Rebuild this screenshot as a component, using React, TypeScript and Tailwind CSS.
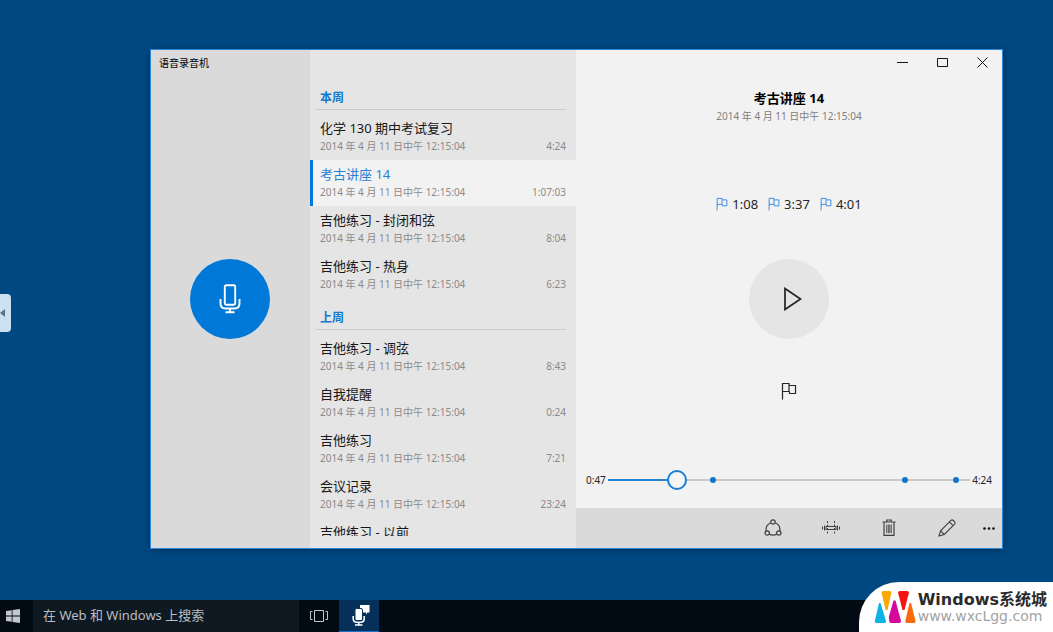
import { useState } from "react";
import type { ReactNode } from "react";

interface Recording {
  title: string;
  duration?: string;
}

interface RecordingGroup {
  label: string;
  items: Recording[];
}

const RECORDED_AT = "2014 年 4 月 11 日中午 12:15:04";

const groups: RecordingGroup[] = [
  {
    label: "本周",
    items: [
      { title: "化学 130 期中考试复习", duration: "4:24" },
      { title: "考古讲座 14", duration: "1:07:03" },
      { title: "吉他练习 - 封闭和弦", duration: "8:04" },
      { title: "吉他练习 - 热身", duration: "6:23" },
    ],
  },
  {
    label: "上周",
    items: [
      { title: "吉他练习 - 调弦", duration: "8:43" },
      { title: "自我提醒", duration: "0:24" },
      { title: "吉他练习", duration: "7:21" },
      { title: "会议记录", duration: "23:24" },
      { title: "吉他练习 - 以前" },
    ],
  },
];

const markers = [
  { time: "1:08", left: "29%" },
  { time: "3:37", left: "82%" },
  { time: "4:01", left: "96%" },
];

function FlagIcon({ className }: { className: string }) {
  return (
    <svg viewBox="0 0 16 18" className={className} fill="none" stroke="currentColor" strokeWidth="1.2" aria-hidden="true">
      <path d="M1.5 17.5V1.5h6.5v8H1.5" />
      <path d="M8 3.5h6.5v8H8.5v-2" />
    </svg>
  );
}

function MicIcon() {
  return (
    <svg viewBox="0 0 22 30" className="h-[30px] w-[22px]" fill="none" stroke="white" strokeWidth="1.9" aria-hidden="true">
      <rect x="5.8" y="1.3" width="10.4" height="19.5" rx="1.5" />
      <path d="M1.5 15v4.5q0 5 5 5h9q5 0 5-5V15M11 24.5v4M6.5 28.3h9" />
    </svg>
  );
}

function ShareIcon() {
  return (
    <svg viewBox="0 0 18 18" className="size-[18px]" fill="none" stroke="currentColor" strokeWidth="1.2" aria-hidden="true">
      <circle cx="9" cy="3" r="2.2" />
      <circle cx="3.2" cy="14" r="2.2" />
      <circle cx="14.8" cy="14" r="2.2" />
      <path d="M6.9 3.7C3.6 5 1.6 8.2 2.1 12M11.1 3.7c3.3 1.3 5.3 4.5 4.8 8.3M5.3 15.1c2.3 1.2 5.1 1.2 7.4 0" />
    </svg>
  );
}

function TrimIcon() {
  return (
    <svg viewBox="0 0 18 14" className="h-[14px] w-[18px]" fill="none" stroke="currentColor" aria-hidden="true">
      <path d="M.5 5.5v3M2.5 4.5v5M15.5 4.5v5M17.5 5.5v3" />
      <path d="M5.5 0v14M12.5 0v14" strokeDasharray="2 1.5" />
      <rect x="4" y="5.5" width="10" height="3" />
    </svg>
  );
}

function TrashIcon() {
  return (
    <svg viewBox="0 0 14 18" className="h-[18px] w-[14px]" fill="none" stroke="currentColor" strokeWidth="1.2" aria-hidden="true">
      <path d="M.5 3h13M4.8 3V1h4.4v2M2 3v13.4h10V3" />
      <path d="M4.7 5.5v8.6M6.3 5.5v8.6M7.8 5.5v8.6M9.3 5.5v8.6" strokeWidth=".9" />
    </svg>
  );
}

function PencilIcon() {
  return (
    <svg viewBox="0 0 18 18" className="size-[18px]" fill="none" stroke="currentColor" strokeWidth="1.1" aria-hidden="true">
      <path d="M1 17l1.6-5.2L12.9 1.4q1.2-1 2.5.1l1.1 1.1q1.1 1.3.1 2.5L6.3 15.4zM2.6 11.8l3.7 3.6M11.4 2.9l3.7 3.7" />
    </svg>
  );
}

function CaptionButton({ label, children }: { label: string; children: ReactNode }) {
  return (
    <button type="button" aria-label={label} className="flex h-6 w-10 items-center justify-center text-neutral-900 hover:bg-black/10">
      <svg viewBox="0 0 11 11" className="size-[11px]" fill="none" stroke="currentColor" aria-hidden="true">
        {children}
      </svg>
    </button>
  );
}

function ToolButton({ label, children }: { label: string; children: ReactNode }) {
  return (
    <button type="button" aria-label={label} className="flex w-[58px] items-center justify-center text-neutral-700 hover:bg-black/5">
      {children}
    </button>
  );
}

function RecordingList({ selected, onSelect }: { selected: string; onSelect: (key: string) => void }) {
  return (
    <nav className="flex w-[266px] shrink-0 flex-col bg-[#e5e5e5] pt-9 pb-3">
      <div className="flex min-h-0 flex-1 flex-col gap-2 overflow-hidden">
        {groups.map((group) => (
          <section key={group.label} className="shrink-0">
            <h2 className="mr-2.5 mb-1 ml-1.5 h-6 border-b border-[#cbcbcb] pl-1 text-[12px] leading-[24px] font-bold text-[#1478cf]">
              {group.label}
            </h2>
            <ul>
              {group.items.map((item) => {
                const key = `${group.label}/${item.title}`;
                const active = key === selected;
                return (
                  <li key={key}>
                    <button
                      type="button"
                      onClick={() => onSelect(key)}
                      className={
                        active
                          ? "block w-full border-l-3 border-[#0078d7] bg-[#f2f2f2] pt-1 pr-2.5 pb-1.5 pl-[7px] text-left"
                          : "block w-full border-l-3 border-transparent pt-1 pr-2.5 pb-1.5 pl-[7px] text-left"
                      }
                    >
                      <span className={active ? "block text-[13px] leading-5 text-[#2a80d4]" : "block text-[13px] leading-5 text-neutral-900"}>
                        {item.title}
                      </span>
                      {item.duration && (
                        <span className="flex justify-between text-[10px] leading-4 text-[#8a8a8a]">
                          <span>{RECORDED_AT}</span>
                          <span>{item.duration}</span>
                        </span>
                      )}
                    </button>
                  </li>
                );
              })}
            </ul>
          </section>
        ))}
      </div>
    </nav>
  );
}

function Scrubber() {
  return (
    <div className="mt-auto mb-[18px] flex items-center gap-0.5 px-2.5 text-[10px] leading-5 text-neutral-800">
      <label htmlFor="position">0:47</label>
      <div className="relative flex h-5 flex-1 items-center">
        <div className="h-0.5 w-[19%] bg-[#2484d6]" />
        <div className="h-0.5 flex-1 bg-[#cacaca]" />
        {markers.map((m) => (
          <span key={m.time} className="absolute top-[7px] -ml-[3px] size-[6px] rounded-full bg-[#1473c4]" style={{ left: m.left }} />
        ))}
        <input
          id="position"
          type="range"
          min={0}
          max={264}
          defaultValue={46}
          className="absolute inset-0 h-5 w-full appearance-none bg-transparent [&::-webkit-slider-thumb]:size-5 [&::-webkit-slider-thumb]:appearance-none [&::-webkit-slider-thumb]:rounded-full [&::-webkit-slider-thumb]:border-2 [&::-webkit-slider-thumb]:border-solid [&::-webkit-slider-thumb]:border-[#1a7fd3] [&::-webkit-slider-thumb]:bg-[#f5f5f5]"
        />
      </div>
      <span>4:24</span>
    </div>
  );
}

function Player() {
  return (
    <main className="flex min-w-0 flex-1 flex-col bg-[#f2f2f2]">
      <div className="flex justify-end">
        <CaptionButton label="最小化">
          <path d="M0 5.5h11" />
        </CaptionButton>
        <CaptionButton label="最大化">
          <path d="M.5 1.5h10v8H.5z" />
        </CaptionButton>
        <CaptionButton label="关闭">
          <path d="M.5.5l10 10M10.5.5l-10 10" />
        </CaptionButton>
      </div>

      <div className="flex flex-col items-center pt-3.5">
        <h1 className="text-[13px] leading-5 font-bold text-black">考古讲座 14</h1>
        <p className="text-[10px] leading-4 text-[#808080]">{RECORDED_AT}</p>
        <div className="mt-[70px] flex gap-2.5">
          {markers.map((m) => (
            <button key={m.time} type="button" className="flex items-center gap-1 text-[13px] leading-5 text-neutral-800">
              <FlagIcon className="h-[14px] w-3 text-[#2f83dd]" />
              {m.time}
            </button>
          ))}
        </div>
        <button type="button" aria-label="播放" className="mt-[45px] flex size-20 items-center justify-center rounded-full bg-[#e5e5e5] pl-2">
          <svg viewBox="0 0 18 24" className="h-6 w-[18px]" fill="none" stroke="#222" strokeWidth="1.7" aria-hidden="true">
            <path d="M1 1.5v21L16.5 12z" />
          </svg>
        </button>
        <button type="button" aria-label="添加标记" className="mt-[42px] flex size-5 items-center justify-center text-neutral-800">
          <FlagIcon className="h-[18px] w-4" />
        </button>
      </div>

      <Scrubber />

      <div className="flex h-10 justify-end bg-[#dadada]">
        <ToolButton label="共享">
          <ShareIcon />
        </ToolButton>
        <ToolButton label="裁剪">
          <TrimIcon />
        </ToolButton>
        <ToolButton label="删除">
          <TrashIcon />
        </ToolButton>
        <ToolButton label="重命名">
          <PencilIcon />
        </ToolButton>
        <button type="button" aria-label="更多" className="flex w-[26px] items-center justify-center">
          <svg viewBox="0 0 12 3" className="h-[3px] w-3" fill="#111" aria-hidden="true">
            <circle cx="1.5" cy="1.5" r="1.3" />
            <circle cx="6" cy="1.5" r="1.3" />
            <circle cx="10.5" cy="1.5" r="1.3" />
          </svg>
        </button>
      </div>
    </main>
  );
}

function Taskbar() {
  return (
    <footer className="flex h-8 shrink-0 bg-[#020b14]">
      <button type="button" aria-label="开始" className="flex w-[33px] items-center pl-1.5">
        <svg viewBox="0 0 14 14" className="size-[14px]" fill="#c3c7cb" aria-hidden="true">
          <path d="M0 2l5.7-.8v5.3H0zM6.5 1.1L14 0v6.5H6.5zM0 7.4h5.7v5.3L0 12zM6.5 7.4H14V14l-7.5-1.1z" />
        </svg>
      </button>
      <input
        type="text"
        aria-label="搜索"
        placeholder="在 Web 和 Windows 上搜索"
        className="w-[266px] bg-[#0f1921] px-2.5 text-[13px] text-white placeholder:text-[#b9bdc1] focus:outline-none"
      />
      <button type="button" aria-label="任务视图" className="flex w-10 items-center justify-center">
        <svg viewBox="0 0 18 12" className="h-3 w-[18px]" fill="none" stroke="#c3c7cb" aria-hidden="true">
          <path d="M4.5.5h9v11h-9zM2.5 1.5h-2v8h2M15.5 1.5h2v8h-2" />
        </svg>
      </button>
      <button type="button" aria-label="语音录音机" className="flex w-10 items-center justify-center border-b border-[#1573c9] bg-[#04305a] pl-1">
        <svg viewBox="0 0 18 21" className="h-[21px] w-[18px]" aria-hidden="true">
          <path d="M8 0h9.5v7.5h-2l-1.5 2v-2H8z" fill="white" />
          <rect x="3" y="3.5" width="7.5" height="12" rx="1.5" fill="white" stroke="#04305a" />
          <path d="M1.2 11v2.5q0 3.7 3.5 3.7h4q3.500 0 3.500-3.700V11M6.700 17v3M3 20h7.500" fill="none" stroke="white" strokeWidth="1.6" />
        </svg>
      </button>
    </footer>
  );
}

function Watermark() {
  return (
    <div className="absolute right-0 bottom-0 flex h-[50px] items-center gap-0.5 rounded-tl-[40px] bg-white pr-1.5 pl-[15px]">
      <svg viewBox="0 0 42 34" className="h-[34px] w-[42px] shrink-0" aria-hidden="true">
        <path d="M7.500 2.500Q7.500 1 9.500 1h6q2 0 2 1.500L13.500 20h-2z" fill="#fba80a" />
        <path d="M24 2.500Q24 1 26 1h7q2 0 2 1.500L30.500 20h-2z" fill="#f51414" />
        <path d="M5 13h1.500l5.500 18q.3 2-1.500 2h-8Q.5 33 .8 31z" fill="#0cb4e6" />
        <path d="M19.500 10.500h2L27 31q.3 2-1.500 2h-8.500q-2 0-1.700-2L14.800 27z" fill="#d30a9c" />
        <path d="M35.500 13h1.500l4.500 18q.3 2-1.500 2h-7q-2 0-1.700-2z" fill="#fa6a0a" />
      </svg>
      <div className="whitespace-nowrap">
        <p className="font-['DejaVu_Sans','Noto_Sans_CJK_SC',sans-serif] text-[16px] leading-[18px] font-bold text-[#2b2b2b]">Windows系统城</p>
        <p className="font-['DejaVu_Sans',sans-serif] text-[14px] leading-[14px] text-[#a3a3a3]">www.wxcLgg.com</p>
      </div>
    </div>
  );
}

export default function App() {
  const [selected, setSelected] = useState("本周/考古讲座 14");

  return (
    <div className="relative flex min-h-screen flex-col overflow-hidden bg-[#004882] font-['Noto_Sans','Noto_Sans_CJK_SC',sans-serif]">
      <button type="button" aria-label="展开侧栏" className="absolute top-[294px] left-0 flex h-[38px] w-[11px] items-center rounded-r-[4px] bg-[#cbe0f0]">
        <svg viewBox="0 0 5 8" className="h-2 w-[5px]" fill="#62707c" aria-hidden="true">
          <path d="M5 0v8L0 4z" />
        </svg>
      </button>

      <div className="flex flex-1 pt-[49px] pr-[50px] pb-[51px] pl-[150px]">
        <div className="flex h-[calc(100vh-132px)] min-w-0 flex-1 border border-[#2a88db] shadow-[0_1px_6px_rgba(0,0,0,0.35)]">
          <aside className="relative flex w-[159px] shrink-0 items-center justify-center bg-[#dadada] pr-0.5">
            <p className="absolute top-1 left-2 text-[10px] leading-[18px] text-black">语音录音机</p>
            <button type="button" aria-label="录音" className="flex size-20 items-center justify-center rounded-full bg-[#0078d7]">
              <MicIcon />
            </button>
          </aside>
          <RecordingList selected={selected} onSelect={setSelected} />
          <Player />
        </div>
      </div>

      <Taskbar />
      <Watermark />
    </div>
  );
}
